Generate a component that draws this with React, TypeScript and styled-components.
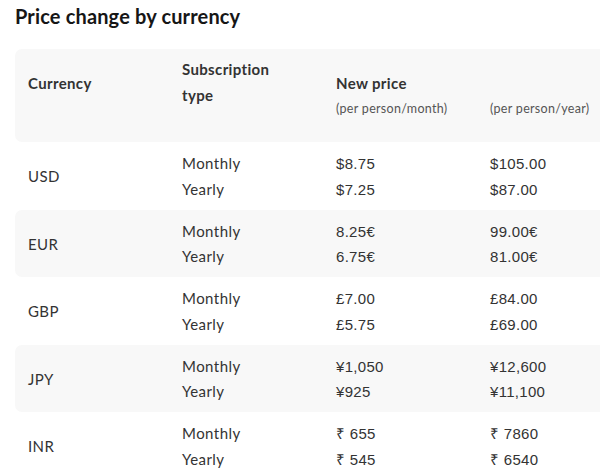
import React from "react";
import styled, { createGlobalStyle } from "styled-components";

const Global = createGlobalStyle`
  html, body { margin: 0; padding: 0; background: #fff; }
  body { overflow: hidden; font-family: "Lato", "Noto Sans", sans-serif; color: #333; }
`;

const Page = styled.div`
  width: 600px;
  height: 476px;
  overflow: hidden;
  padding: 0 0 0 15px;
  box-sizing: border-box;
`;

const Title = styled.h2`
  margin: 0;
  padding-top: 3px;
  height: 49px;
  box-sizing: border-box;
  font-size: 20px;
  line-height: 26px;
  font-weight: 700;
  color: #161616;
  letter-spacing: 0.15px;
`;

const Table = styled.div`
  width: 660px;
  display: flex;
  flex-direction: column;
`;

const HeaderRow = styled.div`
  display: grid;
  grid-template-columns: 154px 154px 154px 154px;
  align-items: start;
  height: 93px;
  box-sizing: border-box;
  padding: 7px 0 0 13px;
  background: #f8f8f8;
  border-radius: 7px;
`;

const HeadCell = styled.div<{ $offset?: boolean }>`
  padding-top: ${(p) => (p.$offset ? "14px" : "0")};
  font-size: 15px;
  font-weight: 700;
  line-height: 26px;
  color: #333;
  letter-spacing: 0.35px;
`;

const SubLabel = styled.div`
  font-size: 12.5px;
  font-weight: 400;
  line-height: 25px;
  color: #555;
  letter-spacing: 0.3px;
`;

const Row = styled.div<{ $shaded: boolean }>`
  display: grid;
  grid-template-columns: 154px 154px 154px 154px;
  align-items: center;
  height: 67.5px;
  box-sizing: border-box;
  padding: 2px 0 0 13px;
  background: ${(p) => (p.$shaded ? "#f8f8f8" : "#fff")};
  border-radius: 7px;
`;

const CurrencyCell = styled.div`
  font-size: 15px;
  line-height: 25.5px;
  color: #333;
  letter-spacing: 0.4px;
`;

const Lines = styled.div`
  display: flex;
  flex-direction: column;
`;

const TypeLine = styled.div`
  font-size: 15px;
  line-height: 25.5px;
  color: #333;
  letter-spacing: 0.45px;
`;

const PriceLine = styled.div`
  font-family: "Liberation Sans", Arial, sans-serif;
  font-size: 15px;
  line-height: 25.5px;
  color: #333;
  letter-spacing: 0.3px;
`;

const data = [
  { cur: "USD", m: ["$8.75", "$7.25"], y: ["$105.00", "$87.00"] },
  { cur: "EUR", m: ["8.25€", "6.75€"], y: ["99.00€", "81.00€"] },
  { cur: "GBP", m: ["£7.00", "£5.75"], y: ["£84.00", "£69.00"] },
  { cur: "JPY", m: ["¥1,050", "¥925"], y: ["¥12,600", "¥11,100"] },
  { cur: "INR", m: ["₹ 655", "₹ 545"], y: ["₹ 7860", "₹ 6540"] },
];

export default function App() {
  return (
    <>
      <Global />
      <Page>
        <Title>Price change by currency</Title>
        <Table>
          <HeaderRow>
            <HeadCell $offset>Currency</HeadCell>
            <HeadCell>
              Subscription
              <br />
              type
            </HeadCell>
            <HeadCell $offset>
              New price
              <SubLabel>(per person/month)</SubLabel>
            </HeadCell>
            <HeadCell $offset>
              &nbsp;
              <SubLabel>(per person/year)</SubLabel>
            </HeadCell>
          </HeaderRow>
          {data.map((d, i) => (
            <Row key={d.cur} $shaded={i % 2 === 1}>
              <CurrencyCell>{d.cur}</CurrencyCell>
              <Lines>
                <TypeLine>Monthly</TypeLine>
                <TypeLine>Yearly</TypeLine>
              </Lines>
              <Lines>
                <PriceLine>{d.m[0]}</PriceLine>
                <PriceLine>{d.m[1]}</PriceLine>
              </Lines>
              <Lines>
                <PriceLine>{d.y[0]}</PriceLine>
                <PriceLine>{d.y[1]}</PriceLine>
              </Lines>
            </Row>
          ))}
        </Table>
      </Page>
    </>
  );
}
